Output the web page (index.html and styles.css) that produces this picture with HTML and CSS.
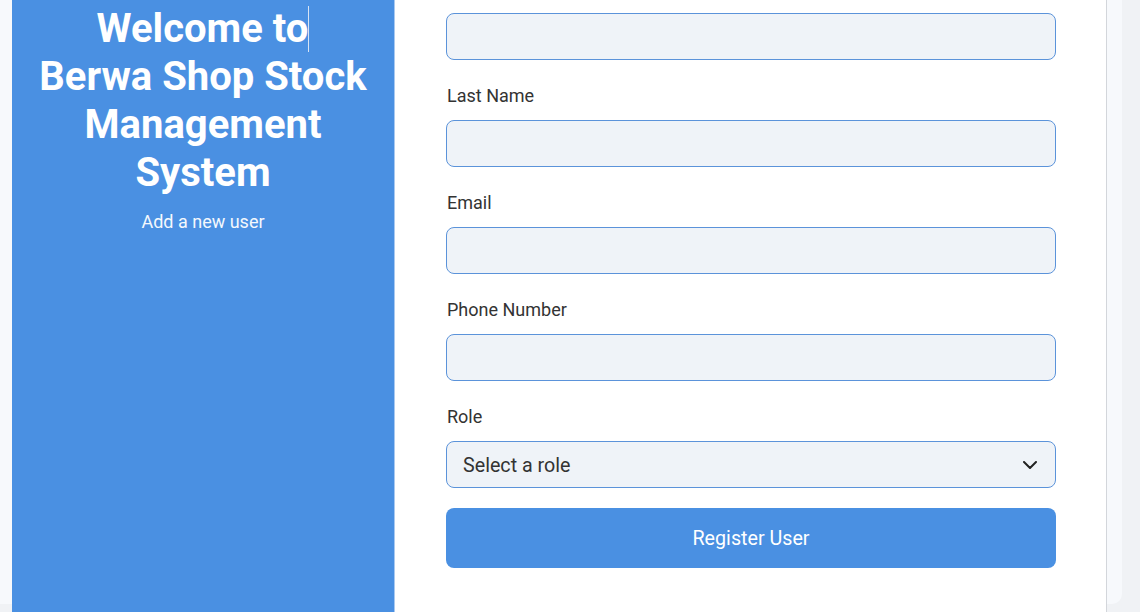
FILE: index.html
```html
<!DOCTYPE html>
<html lang="en">
<head>
<meta charset="utf-8">
<title>Berwa Shop - Add User</title>
<link rel="stylesheet" href="styles.css">
</head>
<body>
<div class="shell">
  <div class="card">
    <aside class="side">
      <h1 class="title">Welcome to<span class="caret"></span><br>Berwa Shop Stock Management System</h1>
      <p class="subtitle">Add a new user</p>
    </aside>
    <main class="form-area">
      <form class="form">
        <div class="group">
          <input class="field" type="text">
        </div>
        <div class="group">
          <label class="label">Last Name</label>
          <input class="field" type="text">
        </div>
        <div class="group">
          <label class="label">Email</label>
          <input class="field" type="email">
        </div>
        <div class="group">
          <label class="label">Phone Number</label>
          <input class="field" type="tel">
        </div>
        <div class="group group-last">
          <label class="label">Role</label>
          <div class="select-wrap">
            <select class="field select">
              <option>Select a role</option>
            </select>
            <svg class="chevron" width="14" height="8" viewBox="0 0 14 8"><path d="M1 1l6 6 6-6" fill="none" stroke="#222" stroke-width="2" stroke-linecap="round" stroke-linejoin="round"/></svg>
          </div>
        </div>
        <button class="submit" type="button">Register User</button>
      </form>
    </main>
  </div>
</div>
</body>
</html>
```

FILE: styles.css
```css
html, body {
  margin: 0;
  padding: 0;
}
body {
  background: #f0f2f5;
  font-family: Roboto, "Liberation Sans", sans-serif;
  height: 612px;
  overflow: hidden;
}
.shell {
  width: 1095px;
  height: 604px;
  padding: 0 15px 0 12px;
  background: #f7f9fc;
  border-bottom-right-radius: 10px;
}
.card {
  display: flex;
  height: 612px;
}
.side {
  width: 383px;
  flex: none;
  background: #4a90e2;
  color: #fff;
  text-align: center;
  padding-top: 5px;
  border-right: 1px solid #a9c9f0;
  box-sizing: border-box;
}
.title {
  margin: 0;
  font-size: 40px;
  line-height: 48px;
  font-weight: 700;
  padding: 0 20px;
}
.caret {
  display: inline-block;
  width: 1px;
  height: 46px;
  background: #d8e4f4;
  vertical-align: -10px;
}
.subtitle {
  margin: 14px 0 0;
  font-size: 18px;
  line-height: 21px;
  color: #f4f8fd;
}
.form-area {
  flex: 1;
  background: #fff;
  border-right: 1px solid #d3d6db;
  padding: 13px 0 0 51px;
}
.form {
  width: 610px;
  display: flex;
  flex-direction: column;
}
.group {
  display: flex;
  flex-direction: column;
  margin-bottom: 26px;
}
.group-last {
  margin-bottom: 20px;
}
.label {
  font-size: 18px;
  line-height: 20px;
  height: 20px;
  color: #333;
  margin-bottom: 14px;
  padding-left: 1px;
}
.field {
  box-sizing: border-box;
  width: 610px;
  height: 47px;
  flex: none;
  border: 1px solid #5b93da;
  border-radius: 8px;
  background: #eff3f8;
  font-family: Roboto, "Liberation Sans", sans-serif;
  font-size: 19.7px;
  color: #333;
  padding: 1px 16px 0;
  outline: none;
}
.select-wrap {
  position: relative;
}
.select {
  appearance: none;
  -webkit-appearance: none;
  display: block;
}
.chevron {
  position: absolute;
  right: 19px;
  top: 20px;
  pointer-events: none;
}
.submit {
  height: 60px;
  width: 610px;
  border: none;
  border-radius: 8px;
  background: #4a90e2;
  color: #fff;
  font-family: Roboto, "Liberation Sans", sans-serif;
  font-size: 19.7px;
  cursor: pointer;
}
```
